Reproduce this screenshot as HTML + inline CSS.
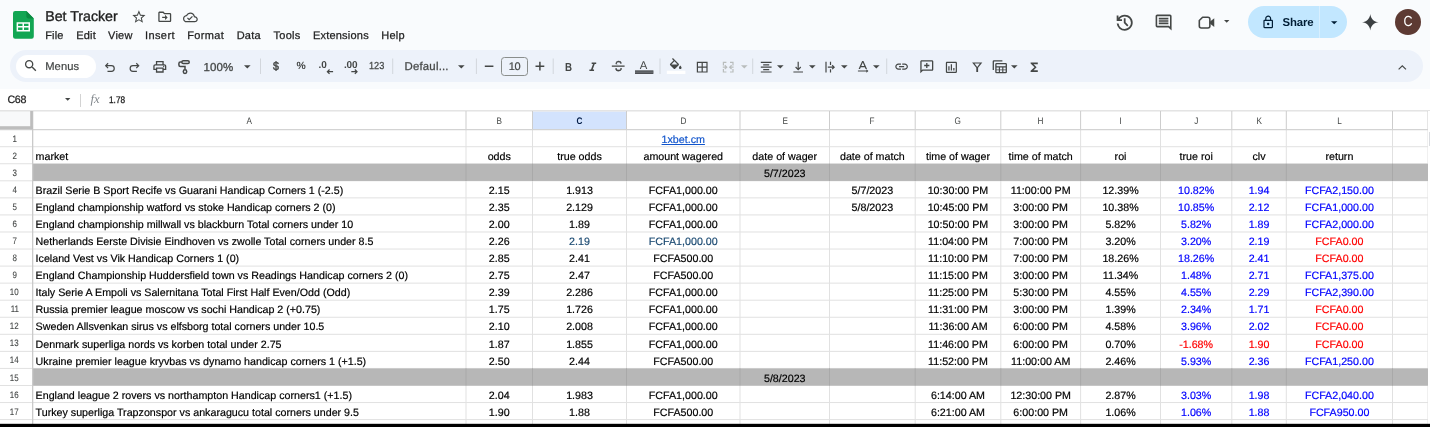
<!DOCTYPE html><html><head><meta charset="utf-8"><title>Bet Tracker</title><style>

*{box-sizing:border-box;margin:0;padding:0}
html,body{width:1430px;height:427px;overflow:hidden;background:#f9fbfd;font-family:"Liberation Sans",sans-serif;text-rendering:geometricPrecision}
#r{position:relative;width:1430px;height:427px;overflow:hidden;background:#f9fbfd;will-change:transform}
.a{position:absolute}
.t{position:absolute;white-space:pre;line-height:1}
.c{position:absolute;white-space:pre;font-size:10.7px;line-height:17px;height:17px;color:#000;overflow:hidden;-webkit-text-stroke:0.18px currentColor}
.ch{position:absolute;font-size:9.5px;color:#444746;text-align:center;line-height:19px;top:111px;height:19px}.ch span{display:inline-block;transform:translateY(1px) scaleX(.86)}
.rh{position:absolute;left:0;width:28.8px;font-size:9.4px;color:#444746;text-align:center}.rh span{display:inline-block;transform:scaleX(.85);-webkit-text-stroke:0.1px #444746}
.vl{position:absolute;width:1px;background:#e1e1e1}
.hl{position:absolute;height:1px;background:#e1e1e1}
svg{position:absolute;overflow:visible}
.ic{fill:#444746}
.m{position:absolute;top:29px;font-size:11px;line-height:14px;color:#1f1f1f;white-space:pre;-webkit-text-stroke:0.25px #1f1f1f}

</style></head><body><div id="r">
<svg style="left:13.4px;top:10.9px" width="20.8" height="27.8" viewBox="0 0 20.8 27.8"><path d="M2.2 0h11.2l7.4 7.4V25.6a2.200 2.200 0 0 1-2.200 2.200H2.200a2.200 2.200 0 0 1-2.200-2.200V2.200a2.200 2.200 0 0 1 2.200-2.200z" fill="#12a653"/><path d="M13.4 0l7.4 7.400h-5.600a1.800 1.800 0 0 1-1.800-1.800z" fill="#0a8a41"/><path d="M3.600 11.200h13.400v9.200H3.600z M5.100 12.700v2.300h4.400v-2.300z M11 12.700v2.300h4.500v-2.300z M5.100 16.500v2.400h4.400v-2.400z M11 16.500v2.400h4.500v-2.400z" fill="#fff" fill-rule="evenodd"/></svg>
<div class="t" style="left:45.2px;top:8.6px;font-size:14.2px;line-height:16px;color:#1f1f1f;-webkit-text-stroke:0.35px #1f1f1f">Bet Tracker</div>
<svg style="left:130.70px;top:9.20px" width="15.8" height="15.8" viewBox="0 0 24 24" ><path fill="#444746" d="M22 9.24l-7.19-.62L12 2 9.19 8.63 2 9.24l5.46 4.73L5.82 21 12 17.27 18.18 21l-1.63-7.03L22 9.24zM12 15.4l-3.76 2.27 1-4.28-3.32-2.88 4.38-.38L12 6.1l1.71 4.04 4.38.38-3.32 2.88 1 4.28L12 15.4z"/></svg>
<svg style="left:156.75px;top:9.35px" width="15.5" height="15.5" viewBox="0 0 24 24" ><path fill="#444746" d="M20 6h-8l-2-2H4c-1.1 0-2 .9-2 2v12c0 1.1.9 2 2 2h16c1.1 0 2-.9 2-2V8c0-1.1-.9-2-2-2zm0 12H4V6h5.17l2 2H20v10zm-7.5-1l4-4-4-4v3H8v2h4.5v3z"/></svg>
<svg style="left:182.60px;top:9.50px" width="14.8" height="14.8" viewBox="0 0 24 24" ><path fill="#444746" d="M19.35 10.04C18.67 6.59 15.64 4 12 4 9.11 4 6.6 5.64 5.35 8.04 2.34 8.36 0 10.91 0 14c0 3.31 2.69 6 6 6h13c2.76 0 5-2.24 5-5 0-2.64-2.05-4.78-4.65-4.96zM19 18H6c-2.21 0-4-1.79-4-4 0-2.05 1.53-3.76 3.56-3.97l1.07-.11.5-.95C8.08 7.14 9.94 6 12 6c2.62 0 4.88 1.86 5.39 4.43l.3 1.5 1.53.11c1.56.1 2.78 1.41 2.78 2.96 0 1.65-1.35 3-3 3zm-9-3.82l-2.09-2.09L6.5 13.5 10 17l6.01-6.01-1.41-1.41z"/></svg>
<div class="m" style="left:45.30px;letter-spacing:0.094px">File</div>
<div class="m" style="left:76.20px;letter-spacing:0.211px">Edit</div>
<div class="m" style="left:108.00px;letter-spacing:0.239px">View</div>
<div class="m" style="left:145.00px;letter-spacing:0.398px">Insert</div>
<div class="m" style="left:187.30px;letter-spacing:0.344px">Format</div>
<div class="m" style="left:236.70px;letter-spacing:0.216px">Data</div>
<div class="m" style="left:273.60px;letter-spacing:0.224px">Tools</div>
<div class="m" style="left:312.90px;letter-spacing:0.219px">Extensions</div>
<div class="m" style="left:381.30px;letter-spacing:0.219px">Help</div>
<svg style="left:1113.90px;top:11.80px" width="21.4" height="21.4" viewBox="0 -960 960 960" ><path fill="#444746" d="M480-120q-138 0-240.500-91.500T122-440h82q14 104 92.500 172T480-200q117 0 198.500-81.500T760-480q0-117-81.500-198.500T480-760q-69 0-129 32t-101 88h110v80H120v-240h80v94q51-64 124.500-99T480-840q75 0 140.500 28.500t114 77q48.500 48.500 77 114T840-480q0 75-28.500 140.500t-77 114q-48.500 48.500-114 77T480-120Zm112-192L440-464v-216h80v184l128 128-56 56Z"/></svg>
<svg style="left:1154.40px;top:12.70px" width="19.2" height="19.2" viewBox="0 0 24 24" ><path fill="#444746" d="M21.990 4c0-1.100-.890-2-1.990-2H4c-1.100 0-2 .900-2 2v12c0 1.100.900 2 2 2h14l4 4-.010-18zM20 4v13.170L18.830 16H4V4h16zM6 12h12v2H6zm0-3h12v2H6zm0-3h12v2H6z"/></svg>
<svg style="left:1197.30px;top:13.10px" width="19.2" height="19.2" viewBox="0 0 24 24" ><path d="M7 5.300H13.600a2.500 2.500 0 0 1 2.500 2.500v8.400a2.500 2.500 0 0 1-2.500 2.500H5.400a2.500 2.500 0 0 1-2.500-2.500V9.400z" fill="none" stroke="#444746" stroke-width="2" stroke-linejoin="round"/><path fill="#444746" d="M16 10.800l5.600-4.300v11l-5.600-4.300z"/></svg>
<svg style="left:1224.30px;top:20.40px" width="5.4" height="2.8" viewBox="0 0 10 5"><path d="M0 0h10L5 5z" fill="#444746"/></svg>
<div class="a" style="left:1248.2px;top:6.2px;width:99.2px;height:31.8px;border-radius:16px;background:#c2e7ff"></div>
<div class="a" style="left:1319.2px;top:6.2px;width:1px;height:31.8px;background:#d8efff"></div>
<svg style="left:1261.30px;top:14.80px" width="14.4" height="14.4" viewBox="0 0 24 24" ><path fill="#001d35" d="M18 8h-1V6c0-2.760-2.240-5-5-5S7 3.240 7 6v2H6c-1.100 0-2 .900-2 2v10c0 1.100.900 2 2 2h12c1.100 0 2-.900 2-2V10c0-1.100-.900-2-2-2zM9 6c0-1.660 1.340-3 3-3s3 1.340 3 3v2H9V6zm9 14H6V10h12v10zm-6-3c1.100 0 2-.900 2-2s-.900-2-2-2-2 .900-2 2 .900 2 2 2z"/></svg>
<div class="t" style="left:1282.4px;top:15.9px;font-size:11.4px;line-height:14px;font-weight:bold;color:#001d35;letter-spacing:-0.1px">Share</div>
<svg style="left:1330.80px;top:20.95px" width="6.4" height="3.5" viewBox="0 0 10 5"><path d="M0 0h10L5 5z" fill="#001d35"/></svg>
<svg style="left:1361.70px;top:14.10px" width="16.6" height="16.6" viewBox="0 0 24 24" ><path fill="#3c4043" d="M12 0C12.800 7 17 11.200 24 12 17 12.800 12.800 17 12 24 11.200 17 7 12.800 0 12 7 11.200 11.200 7 12 0z"/></svg>
<div class="a" style="left:1395px;top:9.1px;width:26.2px;height:26.2px;border-radius:50%;background:#5d3a33"></div>
<div class="t" style="left:1395px;top:14.2px;width:26.2px;text-align:center;font-size:14.6px;line-height:16px;color:#fff;transform:scaleX(.86)">C</div>
<div class="a" style="left:10px;top:50.4px;width:1413px;height:32px;border-radius:16px;background:#edf2fa"></div>
<div class="a" style="left:16px;top:54.6px;width:80px;height:23.2px;border-radius:12px;background:#fff"></div>
<svg style="left:23.10px;top:58.30px" width="15.6" height="15.6" viewBox="0 0 24 24" ><path fill="#444746" d="M15.5 14h-.79l-.28-.27C15.41 12.59 16 11.11 16 9.5 16 5.91 13.09 3 9.5 3S3 5.91 3 9.5 5.91 16 9.5 16c1.61 0 3.09-.59 4.23-1.57l.27.28v.79l5 4.99L20.49 19l-4.99-5zm-6 0C7.01 14 5 11.990 5 9.500S7.010 5 9.500 5 14 7.010 14 9.500 11.990 14 9.500 14z"/></svg>
<div class="t" style="left:45.2px;top:59.7px;font-size:11.2px;line-height:14px;color:#444746;letter-spacing:0.1px;-webkit-text-stroke:0.2px #444746">Menus</div>
<svg style="left:102.80px;top:60.20px" width="14.4" height="14.4" viewBox="0 0 24 24" ><path fill="none" stroke="#444746" stroke-width="2" stroke-linejoin="miter" d="M8.5 5.500 4.500 9.500l4 4M4.500 9.500H14a4.750 4.750 0 0 1 0 9.500H7.500"/></svg>
<svg style="left:127.20px;top:60.20px" width="14.4" height="14.4" viewBox="0 0 24 24" ><path fill="none" stroke="#444746" stroke-width="2" stroke-linejoin="miter" d="M15.500 5.500l4 4-4 4M19.500 9.500H10a4.750 4.750 0 0 0 0 9.500h6.500"/></svg>
<svg style="left:151.90px;top:59.10px" width="15.6" height="15.6" viewBox="0 -960 960 960" ><path fill="#444746" d="M640-640v-120H320v120h-80v-200h480v200h-80Zm-480 80h640-640Zm560 100q17 0 28.500-11.500T760-500q0-17-11.500-28.500T720-540q-17 0-28.500 11.500T680-500q0 17 11.500 28.500T720-460Zm-80 260v-160H320v160h320Zm80 80H240v-160H80v-240q0-51 35-85.500t85-34.500h560q51 0 85.500 34.500T880-520v240H720v160Zm80-240v-160q0-17-11.500-28.500T760-560H200q-17 0-28.500 11.500T160-520v160h80v-80h480v80h80Z"/></svg>
<svg style="left:0;top:0" width="300" height="90"><g fill="none" stroke="#444746" stroke-width="1.500"><rect x="181.900" y="60.800" width="7.300" height="2.700" rx="1.300"/><path d="M181.900 62.100H180.400a1.500 1.500 0 0 0-1.500 1.500V65a1.500 1.500 0 0 0 1.500 1.500H185V69.600"/><rect x="183.300" y="69.700" width="3.400" height="3.800" rx="1.700"/></g></svg>
<div class="t" style="left:203.6px;top:61.4px;font-size:11.5px;line-height:14px;color:#444746;letter-spacing:0.05px;-webkit-text-stroke:0.3px #444746">100%</div>
<svg style="left:243.80px;top:65.00px" width="6.6" height="3.6" viewBox="0 0 10 5"><path d="M0 0h10L5 5z" fill="#444746"/></svg>
<svg style="left:0;top:0" width="1430" height="90"><rect x="260.00" y="58.5" width="1" height="15.5" fill="#d2d6dc"/></svg>
<div class="t" style="left:273.1px;top:58.6px;font-size:11.8px;line-height:14px;color:#444746;-webkit-text-stroke:0.5px #444746;transform:scaleX(.9);transform-origin:0 0">$</div>
<div class="t" style="left:296.4px;top:59.7px;font-size:10.4px;line-height:14px;color:#444746;font-weight:bold">%</div>
<div class="t" style="left:318.6px;top:58.8px;font-size:10px;line-height:14px;color:#444746;font-weight:bold;letter-spacing:-0.2px">.0</div>
<svg style="left:325.50px;top:67.50px" width="7.4" height="7.4" viewBox="0 0 24 24" ><path fill="none" stroke="#444746" stroke-width="4" d="M23 12H5M11.500 5 4.500 12l7 7"/></svg>
<div class="t" style="left:344px;top:58.8px;font-size:10px;line-height:14px;color:#444746;font-weight:bold;letter-spacing:-0.2px">.00</div>
<svg style="left:350.90px;top:67.50px" width="7.4" height="7.4" viewBox="0 0 24 24" ><path fill="none" stroke="#444746" stroke-width="4" d="M1 12h18M12.500 5l7 7-7 7"/></svg>
<div class="t" style="left:368.8px;top:59.6px;font-size:10.2px;line-height:14px;color:#444746;transform:scaleX(.9);transform-origin:0 0;-webkit-text-stroke:0.25px #444746">123</div>
<svg style="left:0;top:0" width="1430" height="90"><rect x="392.20" y="58.5" width="1" height="15.5" fill="#d2d6dc"/></svg>
<div class="t" style="left:404.5px;top:59.8px;font-size:11.4px;line-height:14px;color:#444746;letter-spacing:0.2px;-webkit-text-stroke:0.25px #444746">Defaul...</div>
<svg style="left:457.70px;top:65.00px" width="6.6" height="3.6" viewBox="0 0 10 5"><path d="M0 0h10L5 5z" fill="#444746"/></svg>
<svg style="left:0;top:0" width="1430" height="90"><rect x="475.90" y="58.5" width="1" height="15.5" fill="#d2d6dc"/></svg>
<svg style="left:0;top:0" width="600" height="90"><path fill="#444746" d="M484.800 65.400h8.600v1.500h-8.600zM535.500 65.400h8.800v1.500h-8.800zM539.150 61.750h1.500v8.800h-1.500z"/></svg>
<div class="a" style="left:501.4px;top:56.8px;width:26.4px;height:18.8px;border:1px solid #8a8e8c;border-radius:3.4px"></div>
<div class="t" style="left:501.4px;top:60px;width:26.4px;text-align:center;font-size:11px;line-height:14px;color:#444746;letter-spacing:-0.35px;-webkit-text-stroke:0.2px #444746">10</div>
<svg style="left:0;top:0" width="1430" height="90"><rect x="552.70" y="58.5" width="1" height="15.5" fill="#d2d6dc"/></svg>
<div class="t" style="left:564.6px;top:60.7px;font-size:11.6px;line-height:14px;color:#444746;font-weight:bold;transform:scaleX(.84);transform-origin:0 0">B</div>
<svg style="left:586.20px;top:60.00px" width="13.6" height="13.6" viewBox="0 0 24 24" ><path fill="#444746" d="M10 4.500v2.600h2.400l-3.600 9.800H6v2.600h8.200v-2.600h-2.400l3.600-9.800H18V4.500z"/></svg>
<div class="t" style="left:614.6px;top:59.2px;font-size:14.4px;line-height:16px;color:#444746;transform:scaleX(.74);transform-origin:0 0;-webkit-text-stroke:0.45px #444746">S</div>
<svg style="left:0;top:0" width="700" height="90"><rect x="611.2" y="64.300" width="14" height="3.700" fill="#edf2fa"/><rect x="611.800" y="65.400" width="12.800" height="1.500" fill="#5c5f5e"/></svg>
<div class="t" style="left:639.7px;top:58.6px;font-size:11.3px;line-height:14px;color:#444746">A</div>
<svg style="left:0;top:0" width="700" height="90"><rect x="635" y="70.400" width="18.400" height="3.500" fill="#3c3f42"/><rect x="635" y="71.700" width="18.400" height="0.700" fill="#a3a7ad"/></svg>
<svg style="left:0;top:0" width="1430" height="90"><rect x="659.50" y="58.5" width="1" height="15.5" fill="#d2d6dc"/></svg>
<svg style="left:668.15px;top:57.75px" width="15.5" height="15.5" viewBox="0 0 24 24" ><path fill="#444746" d="M16.560 8.940 7.620 0 6.210 1.410l2.380 2.380-5.150 5.150a1.490 1.490 0 0 0 0 2.120l5.500 5.500c.290.290.680.440 1.060.440s.770-.150 1.060-.440l5.500-5.500c.590-.580.590-1.530 0-2.120zM5.210 10 10 5.210 14.790 10H5.210zM19 11.500s-2 2.170-2 3.500c0 1.100.900 2 2 2s2-.900 2-2c0-1.330-2-3.500-2-3.500z"/></svg>
<svg style="left:0;top:0" width="700" height="90"><rect x="666.800" y="70.700" width="18.600" height="3.300" fill="#fff"/></svg>
<svg style="left:694.60px;top:59.90px" width="14.4" height="14.4" viewBox="0 0 24 24" ><path fill="#444746" d="M3 3v18h18V3H3zm8 16H5v-6h6v6zm0-8H5V5h6v6zm8 8h-6v-6h6v6zm0-8h-6V5h6v6z"/></svg>
<svg style="left:721.20px;top:59.80px" width="14.4" height="14.4" viewBox="0 0 24 24" ><path fill="#b9bdbc" d="M3 3h6v2H5v4H3V3zm12 0h6v6h-2V5h-4V3zM3 15h2v4h4v2H3v-6zm16 0h2v6h-6v-2h4v-4zM3 11h4.200L5.600 9.400 7 8l4 4-4 4-1.400-1.400L7.200 13H3v-2zm18 0v2h-4.200l1.600 1.600L17 16l-4-4 4-4 1.400 1.400L16.800 11H21z"/></svg>
<svg style="left:741.30px;top:65.10px" width="6.6" height="3.6" viewBox="0 0 10 5"><path d="M0 0h10L5 5z" fill="#b9bdbc"/></svg>
<svg style="left:0;top:0" width="1430" height="90"><rect x="752.20" y="58.5" width="1" height="15.5" fill="#d2d6dc"/></svg>
<svg style="left:759.20px;top:59.60px" width="14.4" height="14.4" viewBox="0 0 24 24" ><path fill="#444746" d="M3 3h18v2H3zm4 4h10v2H7zm-4 4h18v2H3zm4 4h10v2H7zm-4 4h18v2H3z"/></svg>
<svg style="left:777.10px;top:65.10px" width="6.6" height="3.6" viewBox="0 0 10 5"><path d="M0 0h10L5 5z" fill="#444746"/></svg>
<svg style="left:791.10px;top:59.80px" width="14.4" height="14.4" viewBox="0 0 24 24" ><path fill="#444746" d="M17 12.400l-1.400-1.400-2.600 2.600V3h-2v10.600L8.400 11 7 12.400l5 5 5-5zM4 19v2h16v-2H4z"/></svg>
<svg style="left:809.40px;top:65.10px" width="6.6" height="3.6" viewBox="0 0 10 5"><path d="M0 0h10L5 5z" fill="#444746"/></svg>
<svg style="left:823.00px;top:59.80px" width="14.4" height="14.4" viewBox="0 0 24 24" ><path fill="#444746" d="M4 3h2v18H4zM11.500 3h2v5.500h-2zM11.500 15.500h2V21h-2zM8 11h8.200l-1.600-1.600L16 8l4 4-4 4-1.400-1.400 1.600-1.600H8v-2z"/></svg>
<svg style="left:841.20px;top:65.10px" width="6.6" height="3.6" viewBox="0 0 10 5"><path d="M0 0h10L5 5z" fill="#444746"/></svg>
<svg style="left:854.80px;top:58.80px" width="15.6" height="15.6" viewBox="0 0 24 24" ><path fill="#444746" d="M11 3h2l5.500 12.500h-2.200l-1.200-2.900H8.900l-1.200 2.900H5.500L11 3zm1 2.400L9.700 10.800h4.600L12 5.400zM4.500 17.600h13v-1.700l3.200 2.600-3.200 2.600v-1.700h-13z"/></svg>
<svg style="left:873.40px;top:65.10px" width="6.6" height="3.6" viewBox="0 0 10 5"><path d="M0 0h10L5 5z" fill="#444746"/></svg>
<svg style="left:0;top:0" width="1430" height="90"><rect x="886.20" y="58.5" width="1" height="15.5" fill="#d2d6dc"/></svg>
<svg style="left:893.80px;top:59.30px" width="15.2" height="15.2" viewBox="0 0 24 24" ><path fill="#444746" d="M3.900 12c0-1.710 1.390-3.100 3.100-3.100h4V7H7c-2.760 0-5 2.240-5 5s2.240 5 5 5h4v-1.900H7c-1.710 0-3.100-1.390-3.100-3.100zM8 13h8v-2H8v2zm9-6h-4v1.900h4c1.710 0 3.100 1.390 3.100 3.100s-1.390 3.100-3.100 3.100h-4V17h4c2.760 0 5-2.240 5-5s-2.240-5-5-5z"/></svg>
<svg style="left:918.90px;top:59.40px" width="15.6" height="15.6" viewBox="0 0 24 24" ><path fill="#444746" d="M20 2H4c-1.100 0-2 .900-2 2v18l4-4h14c1.100 0 2-.900 2-2V4c0-1.100-.900-2-2-2zm0 14H5.170L4 17.170V4h16v12zM11 14h2v-3h3V9h-3V6h-2v3H8v2h3v3z"/></svg>
<svg style="left:944.40px;top:59.60px" width="14.8" height="14.8" viewBox="0 0 24 24" ><path fill="#444746" d="M19 3H5c-1.100 0-2 .900-2 2v14c0 1.100.900 2 2 2h14c1.100 0 2-.900 2-2V5c0-1.100-.900-2-2-2zm0 16H5V5h14v14zM7 10h2v7H7zm4-3h2v10h-2zm4 6h2v4h-2z"/></svg>
<svg style="left:969.60px;top:60.00px" width="14.4" height="14.4" viewBox="0 0 24 24" ><path fill="#444746" d="M3.500 4h17l-7 9v7h-3v-7l-7-9zm4.100 2L12 11.700 16.400 6H7.600z"/></svg>
<svg style="left:992.20px;top:59.20px" width="15.6" height="15.6" viewBox="0 0 24 24" ><path fill="#444746" d="M3 2h13v2H3.500a.5.500 0 0 0-.5.500V17H1V4a2 2 0 0 1 2-2zm4 4h14a2 2 0 0 1 2 2v12a2 2 0 0 1-2 2H7a2 2 0 0 1-2-2V8a2 2 0 0 1 2-2zm0 2v3h14V8H7zm0 5v3h3.500v-3H7zm5.250 0v3h3.500v-3h-3.500zm5.250 0v3H21v-3h-3.500zM7 17.500V20h3.500v-2.500H7zm5.250 0V20h3.500v-2.500h-3.500zm5.250 0V20H21v-2.500h-3.500z"/></svg>
<svg style="left:1011.20px;top:65.10px" width="6.6" height="3.6" viewBox="0 0 10 5"><path d="M0 0h10L5 5z" fill="#444746"/></svg>
<svg style="left:1027.10px;top:59.70px" width="14.4" height="14.4" viewBox="0 0 24 24" ><path fill="#444746" d="M18 4H6v2l6.500 6L6 18v2h12v-3h-7l5-5-5-5h7V4z"/></svg>
<svg style="left:1395.80px;top:60.60px" width="12.6" height="12.6" viewBox="0 0 24 24" ><path fill="none" stroke="#444746" stroke-width="2.200" d="M5 16l7-7 7 7"/></svg>
<div class="a" style="left:0;top:88.5px;width:1430px;height:338.5px;background:#fff"></div>
<div class="t" style="left:7.4px;top:93.5px;font-size:10.7px;line-height:12px;color:#1f1f1f;letter-spacing:-0.3px;-webkit-text-stroke:0.25px #1f1f1f">C68</div>
<svg style="left:65.3px;top:97.8px" width="5.4" height="2.8" viewBox="0 0 10 5"><path d="M0 0h10L5 5z" fill="#444746"/></svg>
<div class="a" style="left:80px;top:94px;width:1px;height:13px;background:#d3d3d3"></div>
<div class="t" style="left:90.4px;top:92.4px;font-size:12.6px;line-height:14px;color:#80868b;font-style:italic;font-family:'Liberation Serif',serif;letter-spacing:0px">fx</div>
<div class="t" style="left:108.7px;top:95.3px;font-size:9.6px;line-height:12px;color:#1f1f1f;transform:scaleX(.86);transform-origin:0 0;-webkit-text-stroke:0.3px #1f1f1f">1.78</div>
<div class="hl" style="left:0;top:109.6px;width:1430px;background:#e3e3e3"></div>
<svg style="left:0;top:0" width="1430" height="427" viewBox="0 0 1430 427"><rect x="0.00" y="111.00" width="32.00" height="18.64" fill="#f8f9fa"/><rect x="532.50" y="111.40" width="94.00" height="18.24" fill="#d3e3fd"/><rect x="0.00" y="110.60" width="1430.00" height="1.00" fill="#e6e6e6"/><rect x="0.00" y="146.20" width="1430.00" height="1.00" fill="#e1e1e1"/><rect x="0.00" y="163.25" width="1430.00" height="1.00" fill="#e1e1e1"/><rect x="0.00" y="180.31" width="1430.00" height="1.00" fill="#e1e1e1"/><rect x="0.00" y="197.36" width="1430.00" height="1.00" fill="#e1e1e1"/><rect x="0.00" y="214.42" width="1430.00" height="1.00" fill="#e1e1e1"/><rect x="0.00" y="231.48" width="1430.00" height="1.00" fill="#e1e1e1"/><rect x="0.00" y="248.53" width="1430.00" height="1.00" fill="#e1e1e1"/><rect x="0.00" y="265.59" width="1430.00" height="1.00" fill="#e1e1e1"/><rect x="0.00" y="282.64" width="1430.00" height="1.00" fill="#e1e1e1"/><rect x="0.00" y="299.70" width="1430.00" height="1.00" fill="#e1e1e1"/><rect x="0.00" y="316.76" width="1430.00" height="1.00" fill="#e1e1e1"/><rect x="0.00" y="333.81" width="1430.00" height="1.00" fill="#e1e1e1"/><rect x="0.00" y="350.87" width="1430.00" height="1.00" fill="#e1e1e1"/><rect x="0.00" y="367.92" width="1430.00" height="1.00" fill="#e1e1e1"/><rect x="0.00" y="384.98" width="1430.00" height="1.00" fill="#e1e1e1"/><rect x="0.00" y="402.04" width="1430.00" height="1.00" fill="#e1e1e1"/><rect x="0.00" y="419.09" width="1430.00" height="1.00" fill="#e1e1e1"/><rect x="0.00" y="436.15" width="1430.00" height="1.00" fill="#e1e1e1"/><rect x="465.50" y="129.64" width="1.00" height="297.36" fill="#e1e1e1"/><rect x="465.50" y="111.00" width="1.00" height="18.64" fill="#cdcdcd"/><rect x="532.00" y="129.64" width="1.00" height="297.36" fill="#e1e1e1"/><rect x="532.00" y="111.00" width="1.00" height="18.64" fill="#cdcdcd"/><rect x="626.00" y="129.64" width="1.00" height="297.36" fill="#e1e1e1"/><rect x="626.00" y="111.00" width="1.00" height="18.64" fill="#cdcdcd"/><rect x="739.50" y="129.64" width="1.00" height="297.36" fill="#e1e1e1"/><rect x="739.50" y="111.00" width="1.00" height="18.64" fill="#cdcdcd"/><rect x="829.00" y="129.64" width="1.00" height="297.36" fill="#e1e1e1"/><rect x="829.00" y="111.00" width="1.00" height="18.64" fill="#cdcdcd"/><rect x="914.70" y="129.64" width="1.00" height="297.36" fill="#e1e1e1"/><rect x="914.70" y="111.00" width="1.00" height="18.64" fill="#cdcdcd"/><rect x="1000.30" y="129.64" width="1.00" height="297.36" fill="#e1e1e1"/><rect x="1000.30" y="111.00" width="1.00" height="18.64" fill="#cdcdcd"/><rect x="1080.10" y="129.64" width="1.00" height="297.36" fill="#e1e1e1"/><rect x="1080.10" y="111.00" width="1.00" height="18.64" fill="#cdcdcd"/><rect x="1160.00" y="129.64" width="1.00" height="297.36" fill="#e1e1e1"/><rect x="1160.00" y="111.00" width="1.00" height="18.64" fill="#cdcdcd"/><rect x="1231.30" y="129.64" width="1.00" height="297.36" fill="#e1e1e1"/><rect x="1231.30" y="111.00" width="1.00" height="18.64" fill="#cdcdcd"/><rect x="1285.80" y="129.64" width="1.00" height="297.36" fill="#e1e1e1"/><rect x="1285.80" y="111.00" width="1.00" height="18.64" fill="#cdcdcd"/><rect x="1392.00" y="129.64" width="1.00" height="297.36" fill="#e1e1e1"/><rect x="1392.00" y="111.00" width="1.00" height="18.64" fill="#cdcdcd"/><rect x="1427.50" y="129.64" width="1.00" height="297.36" fill="#e1e1e1"/><rect x="1427.50" y="111.00" width="1.00" height="18.64" fill="#cdcdcd"/><rect x="33.00" y="163.80" width="1395.00" height="17.16" fill="#b7b7b7"/><rect x="465.50" y="163.60" width="1.00" height="17.36" fill="#a9a9a9"/><rect x="532.00" y="163.60" width="1.00" height="17.36" fill="#a9a9a9"/><rect x="626.00" y="163.60" width="1.00" height="17.36" fill="#a9a9a9"/><rect x="739.50" y="163.60" width="1.00" height="17.36" fill="#a9a9a9"/><rect x="829.00" y="163.60" width="1.00" height="17.36" fill="#a9a9a9"/><rect x="914.70" y="163.60" width="1.00" height="17.36" fill="#a9a9a9"/><rect x="1000.30" y="163.60" width="1.00" height="17.36" fill="#a9a9a9"/><rect x="1080.10" y="163.60" width="1.00" height="17.36" fill="#a9a9a9"/><rect x="1160.00" y="163.60" width="1.00" height="17.36" fill="#a9a9a9"/><rect x="1231.30" y="163.60" width="1.00" height="17.36" fill="#a9a9a9"/><rect x="1285.80" y="163.60" width="1.00" height="17.36" fill="#a9a9a9"/><rect x="1392.00" y="163.60" width="1.00" height="17.36" fill="#a9a9a9"/><rect x="33.00" y="368.47" width="1395.00" height="17.16" fill="#b7b7b7"/><rect x="465.50" y="368.27" width="1.00" height="17.36" fill="#a9a9a9"/><rect x="532.00" y="368.27" width="1.00" height="17.36" fill="#a9a9a9"/><rect x="626.00" y="368.27" width="1.00" height="17.36" fill="#a9a9a9"/><rect x="739.50" y="368.27" width="1.00" height="17.36" fill="#a9a9a9"/><rect x="829.00" y="368.27" width="1.00" height="17.36" fill="#a9a9a9"/><rect x="914.70" y="368.27" width="1.00" height="17.36" fill="#a9a9a9"/><rect x="1000.30" y="368.27" width="1.00" height="17.36" fill="#a9a9a9"/><rect x="1080.10" y="368.27" width="1.00" height="17.36" fill="#a9a9a9"/><rect x="1160.00" y="368.27" width="1.00" height="17.36" fill="#a9a9a9"/><rect x="1231.30" y="368.27" width="1.00" height="17.36" fill="#a9a9a9"/><rect x="1285.80" y="368.27" width="1.00" height="17.36" fill="#a9a9a9"/><rect x="1392.00" y="368.27" width="1.00" height="17.36" fill="#a9a9a9"/><rect x="0.00" y="129.04" width="1430.00" height="1.20" fill="#d2d2d2"/><rect x="32.00" y="111.00" width="1.30" height="316.00" fill="#cacaca"/><rect x="0.00" y="126.20" width="32.80" height="3.00" fill="#bdbdbd"/><rect x="30.20" y="111.00" width="2.60" height="18.20" fill="#bdbdbd"/></svg>
<div class="ch" style="left:33px;width:433px;"><span>A</span></div>
<div class="ch" style="left:466px;width:66.5px;"><span>B</span></div>
<div class="ch" style="left:532.5px;width:94.0px;font-weight:bold;color:#041e49;"><span>C</span></div>
<div class="ch" style="left:626.5px;width:113.5px;"><span>D</span></div>
<div class="ch" style="left:740px;width:89.5px;"><span>E</span></div>
<div class="ch" style="left:829.5px;width:85.70000000000005px;"><span>F</span></div>
<div class="ch" style="left:915.2px;width:85.59999999999991px;"><span>G</span></div>
<div class="ch" style="left:1000.8px;width:79.79999999999995px;"><span>H</span></div>
<div class="ch" style="left:1080.6px;width:79.90000000000009px;"><span>I</span></div>
<div class="ch" style="left:1160.5px;width:71.29999999999995px;"><span>J</span></div>
<div class="ch" style="left:1231.8px;width:54.5px;"><span>K</span></div>
<div class="ch" style="left:1286.3px;width:106.20000000000005px;"><span>L</span></div>
<div class="rh" style="top:130px;line-height:17px;height:17px"><span>1</span></div>
<div class="rh" style="top:147px;line-height:17px;height:17px"><span>2</span></div>
<div class="rh" style="top:164px;line-height:17px;height:17px"><span>3</span></div>
<div class="rh" style="top:181px;line-height:17px;height:17px"><span>4</span></div>
<div class="rh" style="top:198px;line-height:17px;height:17px"><span>5</span></div>
<div class="rh" style="top:215px;line-height:17px;height:17px"><span>6</span></div>
<div class="rh" style="top:232px;line-height:17px;height:17px"><span>7</span></div>
<div class="rh" style="top:249px;line-height:17px;height:17px"><span>8</span></div>
<div class="rh" style="top:266px;line-height:17px;height:17px"><span>9</span></div>
<div class="rh" style="top:283px;line-height:17px;height:17px"><span>10</span></div>
<div class="rh" style="top:300px;line-height:17px;height:17px"><span>11</span></div>
<div class="rh" style="top:317px;line-height:17px;height:17px"><span>12</span></div>
<div class="rh" style="top:334px;line-height:17px;height:17px"><span>13</span></div>
<div class="rh" style="top:351px;line-height:17px;height:17px"><span>14</span></div>
<div class="rh" style="top:369px;line-height:17px;height:17px"><span>15</span></div>
<div class="rh" style="top:386px;line-height:17px;height:17px"><span>16</span></div>
<div class="rh" style="top:403px;line-height:17px;height:17px"><span>17</span></div>
<div class="c" style="left:626.5px;top:132px;width:113.5px;color:#1155cc;text-align:center;text-decoration:underline;">1xbet.cm</div>
<div class="c" style="left:33px;top:149px;width:433px;color:#000;padding-left:2.6px;text-align:left;">market</div>
<div class="c" style="left:466px;top:149px;width:66.5px;color:#000;text-align:center;">odds</div>
<div class="c" style="left:532.5px;top:149px;width:94.0px;color:#000;text-align:center;">true odds</div>
<div class="c" style="left:626.5px;top:149px;width:113.5px;color:#000;text-align:center;">amount wagered</div>
<div class="c" style="left:740px;top:149px;width:89.5px;color:#000;text-align:center;">date of wager</div>
<div class="c" style="left:829.5px;top:149px;width:85.70000000000005px;color:#000;text-align:center;">date of match</div>
<div class="c" style="left:915.2px;top:149px;width:85.59999999999991px;color:#000;text-align:center;">time of wager</div>
<div class="c" style="left:1000.8px;top:149px;width:79.79999999999995px;color:#000;text-align:center;">time of match</div>
<div class="c" style="left:1080.6px;top:149px;width:79.90000000000009px;color:#000;text-align:center;">roi</div>
<div class="c" style="left:1160.5px;top:149px;width:71.29999999999995px;color:#000;text-align:center;">true roi</div>
<div class="c" style="left:1231.8px;top:149px;width:54.5px;color:#000;text-align:center;">clv</div>
<div class="c" style="left:1286.3px;top:149px;width:106.20000000000005px;color:#000;text-align:center;">return</div>
<div class="c" style="left:740px;top:166px;width:89.5px;color:#000;text-align:center;">5/7/2023</div>
<div class="c" style="left:33px;top:183px;width:433px;color:#000;padding-left:2.6px;text-align:left;">Brazil Serie B Sport Recife vs Guarani Handicap Corners 1 (-2.5)</div>
<div class="c" style="left:466px;top:183px;width:66.5px;color:#000;text-align:center;">2.15</div>
<div class="c" style="left:532.5px;top:183px;width:94.0px;color:#000;text-align:center;">1.913</div>
<div class="c" style="left:626.5px;top:183px;width:113.5px;color:#000;text-align:center;">FCFA1,000.00</div>
<div class="c" style="left:829.5px;top:183px;width:85.70000000000005px;color:#000;text-align:center;">5/7/2023</div>
<div class="c" style="left:915.2px;top:183px;width:85.59999999999991px;color:#000;text-align:center;">10:30:00 PM</div>
<div class="c" style="left:1000.8px;top:183px;width:79.79999999999995px;color:#000;text-align:center;">11:00:00 PM</div>
<div class="c" style="left:1080.6px;top:183px;width:79.90000000000009px;color:#000;text-align:center;">12.39%</div>
<div class="c" style="left:1160.5px;top:183px;width:71.29999999999995px;color:#0000ff;text-align:center;">10.82%</div>
<div class="c" style="left:1231.8px;top:183px;width:54.5px;color:#0000ff;text-align:center;">1.94</div>
<div class="c" style="left:1286.3px;top:183px;width:106.20000000000005px;color:#0000ff;text-align:center;">FCFA2,150.00</div>
<div class="c" style="left:33px;top:200px;width:433px;color:#000;padding-left:2.6px;text-align:left;">England championship watford vs stoke Handicap corners 2 (0)</div>
<div class="c" style="left:466px;top:200px;width:66.5px;color:#000;text-align:center;">2.35</div>
<div class="c" style="left:532.5px;top:200px;width:94.0px;color:#000;text-align:center;">2.129</div>
<div class="c" style="left:626.5px;top:200px;width:113.5px;color:#000;text-align:center;">FCFA1,000.00</div>
<div class="c" style="left:829.5px;top:200px;width:85.70000000000005px;color:#000;text-align:center;">5/8/2023</div>
<div class="c" style="left:915.2px;top:200px;width:85.59999999999991px;color:#000;text-align:center;">10:45:00 PM</div>
<div class="c" style="left:1000.8px;top:200px;width:79.79999999999995px;color:#000;text-align:center;">3:00:00 PM</div>
<div class="c" style="left:1080.6px;top:200px;width:79.90000000000009px;color:#000;text-align:center;">10.38%</div>
<div class="c" style="left:1160.5px;top:200px;width:71.29999999999995px;color:#0000ff;text-align:center;">10.85%</div>
<div class="c" style="left:1231.8px;top:200px;width:54.5px;color:#0000ff;text-align:center;">2.12</div>
<div class="c" style="left:1286.3px;top:200px;width:106.20000000000005px;color:#0000ff;text-align:center;">FCFA1,000.00</div>
<div class="c" style="left:33px;top:217px;width:433px;color:#000;padding-left:2.6px;text-align:left;">England championship millwall vs blackburn Total corners under 10</div>
<div class="c" style="left:466px;top:217px;width:66.5px;color:#000;text-align:center;">2.00</div>
<div class="c" style="left:532.5px;top:217px;width:94.0px;color:#000;text-align:center;">1.89</div>
<div class="c" style="left:626.5px;top:217px;width:113.5px;color:#000;text-align:center;">FCFA1,000.00</div>
<div class="c" style="left:915.2px;top:217px;width:85.59999999999991px;color:#000;text-align:center;">10:50:00 PM</div>
<div class="c" style="left:1000.8px;top:217px;width:79.79999999999995px;color:#000;text-align:center;">3:00:00 PM</div>
<div class="c" style="left:1080.6px;top:217px;width:79.90000000000009px;color:#000;text-align:center;">5.82%</div>
<div class="c" style="left:1160.5px;top:217px;width:71.29999999999995px;color:#0000ff;text-align:center;">5.82%</div>
<div class="c" style="left:1231.8px;top:217px;width:54.5px;color:#0000ff;text-align:center;">1.89</div>
<div class="c" style="left:1286.3px;top:217px;width:106.20000000000005px;color:#0000ff;text-align:center;">FCFA2,000.00</div>
<div class="c" style="left:33px;top:234px;width:433px;color:#000;padding-left:2.6px;text-align:left;">Netherlands Eerste Divisie Eindhoven vs zwolle Total corners under 8.5</div>
<div class="c" style="left:466px;top:234px;width:66.5px;color:#000;text-align:center;">2.26</div>
<div class="c" style="left:532.5px;top:234px;width:94.0px;color:#1b4a72;text-align:center;">2.19</div>
<div class="c" style="left:626.5px;top:234px;width:113.5px;color:#1b4a72;text-align:center;">FCFA1,000.00</div>
<div class="c" style="left:915.2px;top:234px;width:85.59999999999991px;color:#000;text-align:center;">11:04:00 PM</div>
<div class="c" style="left:1000.8px;top:234px;width:79.79999999999995px;color:#000;text-align:center;">7:00:00 PM</div>
<div class="c" style="left:1080.6px;top:234px;width:79.90000000000009px;color:#000;text-align:center;">3.20%</div>
<div class="c" style="left:1160.5px;top:234px;width:71.29999999999995px;color:#0000ff;text-align:center;">3.20%</div>
<div class="c" style="left:1231.8px;top:234px;width:54.5px;color:#0000ff;text-align:center;">2.19</div>
<div class="c" style="left:1286.3px;top:234px;width:106.20000000000005px;color:#ff0000;text-align:center;">FCFA0.00</div>
<div class="c" style="left:33px;top:251px;width:433px;color:#000;padding-left:2.6px;text-align:left;">Iceland Vest vs Vik Handicap Corners 1 (0)</div>
<div class="c" style="left:466px;top:251px;width:66.5px;color:#000;text-align:center;">2.85</div>
<div class="c" style="left:532.5px;top:251px;width:94.0px;color:#000;text-align:center;">2.41</div>
<div class="c" style="left:626.5px;top:251px;width:113.5px;color:#000;text-align:center;">FCFA500.00</div>
<div class="c" style="left:915.2px;top:251px;width:85.59999999999991px;color:#000;text-align:center;">11:10:00 PM</div>
<div class="c" style="left:1000.8px;top:251px;width:79.79999999999995px;color:#000;text-align:center;">7:00:00 PM</div>
<div class="c" style="left:1080.6px;top:251px;width:79.90000000000009px;color:#000;text-align:center;">18.26%</div>
<div class="c" style="left:1160.5px;top:251px;width:71.29999999999995px;color:#0000ff;text-align:center;">18.26%</div>
<div class="c" style="left:1231.8px;top:251px;width:54.5px;color:#0000ff;text-align:center;">2.41</div>
<div class="c" style="left:1286.3px;top:251px;width:106.20000000000005px;color:#ff0000;text-align:center;">FCFA0.00</div>
<div class="c" style="left:33px;top:268px;width:433px;color:#000;padding-left:2.6px;text-align:left;">England Championship Huddersfield town vs Readings Handicap corners 2 (0)</div>
<div class="c" style="left:466px;top:268px;width:66.5px;color:#000;text-align:center;">2.75</div>
<div class="c" style="left:532.5px;top:268px;width:94.0px;color:#000;text-align:center;">2.47</div>
<div class="c" style="left:626.5px;top:268px;width:113.5px;color:#000;text-align:center;">FCFA500.00</div>
<div class="c" style="left:915.2px;top:268px;width:85.59999999999991px;color:#000;text-align:center;">11:15:00 PM</div>
<div class="c" style="left:1000.8px;top:268px;width:79.79999999999995px;color:#000;text-align:center;">3:00:00 PM</div>
<div class="c" style="left:1080.6px;top:268px;width:79.90000000000009px;color:#000;text-align:center;">11.34%</div>
<div class="c" style="left:1160.5px;top:268px;width:71.29999999999995px;color:#0000ff;text-align:center;">1.48%</div>
<div class="c" style="left:1231.8px;top:268px;width:54.5px;color:#0000ff;text-align:center;">2.71</div>
<div class="c" style="left:1286.3px;top:268px;width:106.20000000000005px;color:#0000ff;text-align:center;">FCFA1,375.00</div>
<div class="c" style="left:33px;top:285px;width:433px;color:#000;padding-left:2.6px;text-align:left;">Italy Serie A Empoli vs Salernitana Total First Half Even/Odd (Odd)</div>
<div class="c" style="left:466px;top:285px;width:66.5px;color:#000;text-align:center;">2.39</div>
<div class="c" style="left:532.5px;top:285px;width:94.0px;color:#000;text-align:center;">2.286</div>
<div class="c" style="left:626.5px;top:285px;width:113.5px;color:#000;text-align:center;">FCFA1,000.00</div>
<div class="c" style="left:915.2px;top:285px;width:85.59999999999991px;color:#000;text-align:center;">11:25:00 PM</div>
<div class="c" style="left:1000.8px;top:285px;width:79.79999999999995px;color:#000;text-align:center;">5:30:00 PM</div>
<div class="c" style="left:1080.6px;top:285px;width:79.90000000000009px;color:#000;text-align:center;">4.55%</div>
<div class="c" style="left:1160.5px;top:285px;width:71.29999999999995px;color:#0000ff;text-align:center;">4.55%</div>
<div class="c" style="left:1231.8px;top:285px;width:54.5px;color:#0000ff;text-align:center;">2.29</div>
<div class="c" style="left:1286.3px;top:285px;width:106.20000000000005px;color:#0000ff;text-align:center;">FCFA2,390.00</div>
<div class="c" style="left:33px;top:302px;width:433px;color:#000;padding-left:2.6px;text-align:left;">Russia premier league moscow vs sochi Handicap 2 (+0.75)</div>
<div class="c" style="left:466px;top:302px;width:66.5px;color:#000;text-align:center;">1.75</div>
<div class="c" style="left:532.5px;top:302px;width:94.0px;color:#000;text-align:center;">1.726</div>
<div class="c" style="left:626.5px;top:302px;width:113.5px;color:#000;text-align:center;">FCFA1,000.00</div>
<div class="c" style="left:915.2px;top:302px;width:85.59999999999991px;color:#000;text-align:center;">11:31:00 PM</div>
<div class="c" style="left:1000.8px;top:302px;width:79.79999999999995px;color:#000;text-align:center;">3:00:00 PM</div>
<div class="c" style="left:1080.6px;top:302px;width:79.90000000000009px;color:#000;text-align:center;">1.39%</div>
<div class="c" style="left:1160.5px;top:302px;width:71.29999999999995px;color:#0000ff;text-align:center;">2.34%</div>
<div class="c" style="left:1231.8px;top:302px;width:54.5px;color:#0000ff;text-align:center;">1.71</div>
<div class="c" style="left:1286.3px;top:302px;width:106.20000000000005px;color:#ff0000;text-align:center;">FCFA0.00</div>
<div class="c" style="left:33px;top:319px;width:433px;color:#000;padding-left:2.6px;text-align:left;">Sweden Allsvenkan sirus vs elfsborg total corners under 10.5</div>
<div class="c" style="left:466px;top:319px;width:66.5px;color:#000;text-align:center;">2.10</div>
<div class="c" style="left:532.5px;top:319px;width:94.0px;color:#000;text-align:center;">2.008</div>
<div class="c" style="left:626.5px;top:319px;width:113.5px;color:#000;text-align:center;">FCFA1,000.00</div>
<div class="c" style="left:915.2px;top:319px;width:85.59999999999991px;color:#000;text-align:center;">11:36:00 AM</div>
<div class="c" style="left:1000.8px;top:319px;width:79.79999999999995px;color:#000;text-align:center;">6:00:00 PM</div>
<div class="c" style="left:1080.6px;top:319px;width:79.90000000000009px;color:#000;text-align:center;">4.58%</div>
<div class="c" style="left:1160.5px;top:319px;width:71.29999999999995px;color:#0000ff;text-align:center;">3.96%</div>
<div class="c" style="left:1231.8px;top:319px;width:54.5px;color:#0000ff;text-align:center;">2.02</div>
<div class="c" style="left:1286.3px;top:319px;width:106.20000000000005px;color:#ff0000;text-align:center;">FCFA0.00</div>
<div class="c" style="left:33px;top:337px;width:433px;color:#000;padding-left:2.6px;text-align:left;">Denmark superliga nords vs korben total under 2.75</div>
<div class="c" style="left:466px;top:337px;width:66.5px;color:#000;text-align:center;">1.87</div>
<div class="c" style="left:532.5px;top:337px;width:94.0px;color:#000;text-align:center;">1.855</div>
<div class="c" style="left:626.5px;top:337px;width:113.5px;color:#000;text-align:center;">FCFA1,000.00</div>
<div class="c" style="left:915.2px;top:337px;width:85.59999999999991px;color:#000;text-align:center;">11:46:00 PM</div>
<div class="c" style="left:1000.8px;top:337px;width:79.79999999999995px;color:#000;text-align:center;">6:00:00 PM</div>
<div class="c" style="left:1080.6px;top:337px;width:79.90000000000009px;color:#000;text-align:center;">0.70%</div>
<div class="c" style="left:1160.5px;top:337px;width:71.29999999999995px;color:#ff0000;text-align:center;">-1.68%</div>
<div class="c" style="left:1231.8px;top:337px;width:54.5px;color:#ff0000;text-align:center;">1.90</div>
<div class="c" style="left:1286.3px;top:337px;width:106.20000000000005px;color:#ff0000;text-align:center;">FCFA0.00</div>
<div class="c" style="left:33px;top:354px;width:433px;color:#000;padding-left:2.6px;text-align:left;">Ukraine premier league kryvbas vs dynamo handicap corners 1 (+1.5)</div>
<div class="c" style="left:466px;top:354px;width:66.5px;color:#000;text-align:center;">2.50</div>
<div class="c" style="left:532.5px;top:354px;width:94.0px;color:#000;text-align:center;">2.44</div>
<div class="c" style="left:626.5px;top:354px;width:113.5px;color:#000;text-align:center;">FCFA500.00</div>
<div class="c" style="left:915.2px;top:354px;width:85.59999999999991px;color:#000;text-align:center;">11:52:00 PM</div>
<div class="c" style="left:1000.8px;top:354px;width:79.79999999999995px;color:#000;text-align:center;">11:00:00 AM</div>
<div class="c" style="left:1080.6px;top:354px;width:79.90000000000009px;color:#000;text-align:center;">2.46%</div>
<div class="c" style="left:1160.5px;top:354px;width:71.29999999999995px;color:#0000ff;text-align:center;">5.93%</div>
<div class="c" style="left:1231.8px;top:354px;width:54.5px;color:#0000ff;text-align:center;">2.36</div>
<div class="c" style="left:1286.3px;top:354px;width:106.20000000000005px;color:#0000ff;text-align:center;">FCFA1,250.00</div>
<div class="c" style="left:740px;top:371px;width:89.5px;color:#000;text-align:center;">5/8/2023</div>
<div class="c" style="left:33px;top:388px;width:433px;color:#000;padding-left:2.6px;text-align:left;">England league 2 rovers vs northampton Handicap corners1 (+1.5)</div>
<div class="c" style="left:466px;top:388px;width:66.5px;color:#000;text-align:center;">2.04</div>
<div class="c" style="left:532.5px;top:388px;width:94.0px;color:#000;text-align:center;">1.983</div>
<div class="c" style="left:626.5px;top:388px;width:113.5px;color:#000;text-align:center;">FCFA1,000.00</div>
<div class="c" style="left:915.2px;top:388px;width:85.59999999999991px;color:#000;text-align:center;">6:14:00 AM</div>
<div class="c" style="left:1000.8px;top:388px;width:79.79999999999995px;color:#000;text-align:center;">12:30:00 PM</div>
<div class="c" style="left:1080.6px;top:388px;width:79.90000000000009px;color:#000;text-align:center;">2.87%</div>
<div class="c" style="left:1160.5px;top:388px;width:71.29999999999995px;color:#0000ff;text-align:center;">3.03%</div>
<div class="c" style="left:1231.8px;top:388px;width:54.5px;color:#0000ff;text-align:center;">1.98</div>
<div class="c" style="left:1286.3px;top:388px;width:106.20000000000005px;color:#0000ff;text-align:center;">FCFA2,040.00</div>
<div class="c" style="left:33px;top:405px;width:433px;color:#000;padding-left:2.6px;text-align:left;">Turkey superliga Trapzonspor vs ankaragucu total corners under 9.5</div>
<div class="c" style="left:466px;top:405px;width:66.5px;color:#000;text-align:center;">1.90</div>
<div class="c" style="left:532.5px;top:405px;width:94.0px;color:#000;text-align:center;">1.88</div>
<div class="c" style="left:626.5px;top:405px;width:113.5px;color:#000;text-align:center;">FCFA500.00</div>
<div class="c" style="left:915.2px;top:405px;width:85.59999999999991px;color:#000;text-align:center;">6:21:00 AM</div>
<div class="c" style="left:1000.8px;top:405px;width:79.79999999999995px;color:#000;text-align:center;">6:00:00 PM</div>
<div class="c" style="left:1080.6px;top:405px;width:79.90000000000009px;color:#000;text-align:center;">1.06%</div>
<div class="c" style="left:1160.5px;top:405px;width:71.29999999999995px;color:#0000ff;text-align:center;">1.06%</div>
<div class="c" style="left:1231.8px;top:405px;width:54.5px;color:#0000ff;text-align:center;">1.88</div>
<div class="c" style="left:1286.3px;top:405px;width:106.20000000000005px;color:#0000ff;text-align:center;">FCFA950.00</div>
<div class="a" style="left:1428px;top:111px;width:2px;height:316px;background:#fff"></div>
<div class="a" style="left:1428.5px;top:132px;width:1.5px;height:14px;background:#dadce0"></div>
<svg style="left:0;top:0" width="1430" height="427"><rect x="0" y="423.8" width="1430" height="3.2" fill="#000"/></svg>
</div></body></html>
